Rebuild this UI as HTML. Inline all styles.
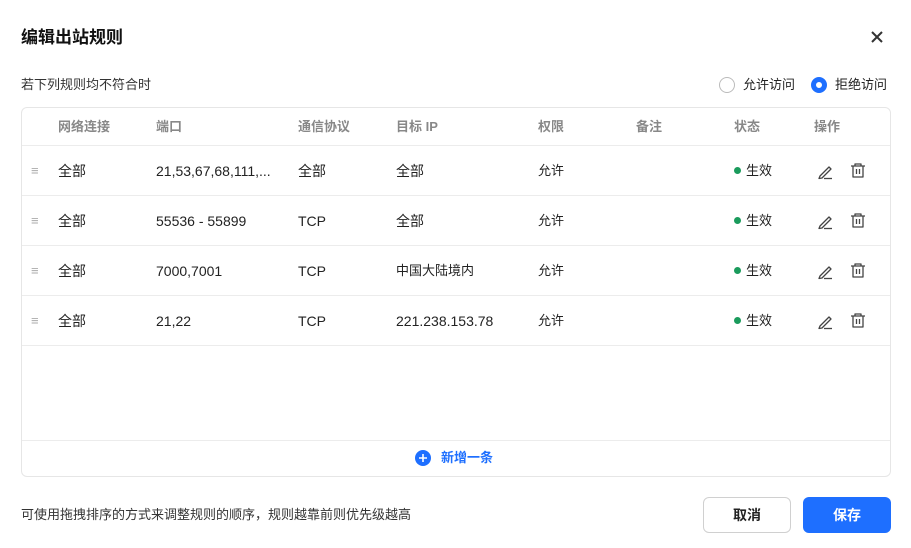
<!DOCTYPE html>
<html><head><meta charset="utf-8"><style>
*{margin:0;padding:0;box-sizing:border-box}
body{width:911px;height:548px;background:#fff;font-family:"Liberation Sans","Noto Sans CJK SC",sans-serif;color:#1f1f1f;position:relative;overflow:hidden;font-size:14px;line-height:20px}
.a{position:absolute;white-space:nowrap;line-height:20px}
.title{left:21px;top:28px;font-size:17px;font-weight:bold;color:#111}
.box{left:21px;top:107px;width:870px;height:370px;border:1px solid #e6e6e6;border-radius:6px}
.hl{position:absolute;left:22px;width:868px;height:1px;background:#ececec}
.th{font-size:13px;color:#888;font-weight:bold;top:117px}
.td{font-size:14px;color:#222;top:0}
.dot{width:7px;height:7px;border-radius:50%;background:#1a9b5c;display:inline-block;margin-right:5px;vertical-align:1px}
.btn{top:497px;height:36px;border-radius:6px;font-size:14px;font-weight:bold;text-align:center;line-height:34px}
</style></head><body>
<div class="a title">编辑出站规则</div>
<svg class="a" style="left:870px;top:30px" width="14" height="14" viewBox="0 0 14 14"><path d="M2 2L12 12M12 2L2 12" stroke="#333" stroke-width="2"/></svg>
<div class="a" style="left:21px;top:75px;font-size:13px;color:#333">若下列规则均不符合时</div>
<div class="a" style="left:719px;top:77px;width:16px;height:16px;border:1px solid #bbb;border-radius:50%"></div>
<div class="a" style="left:743px;top:75px;font-size:13px;color:#222">允许访问</div>
<div class="a" style="left:811px;top:77px;width:16px;height:16px;border:5px solid #1e6fff;border-radius:50%"></div>
<div class="a" style="left:835px;top:75px;font-size:13px;color:#222">拒绝访问</div>
<div class="a box"></div>
<div class="hl" style="top:145px"></div>
<div class="hl" style="top:195px"></div>
<div class="hl" style="top:245px"></div>
<div class="hl" style="top:295px"></div>
<div class="hl" style="top:345px"></div>
<div class="hl" style="top:440px"></div>
<div class="a th" style="left:58px">网络连接</div>
<div class="a th" style="left:156px">端口</div>
<div class="a th" style="left:298px">通信协议</div>
<div class="a th" style="left:396px">目标 IP</div>
<div class="a th" style="left:538px">权限</div>
<div class="a th" style="left:636px">备注</div>
<div class="a th" style="left:734px">状态</div>
<div class="a th" style="left:814px">操作</div>
<div class="a" style="left:0;top:161px;width:911px">
 <span class="a" style="left:31px;top:0;color:#aaa;font-size:13px">≡</span>
 <span class="a td" style="left:58px">全部</span><span class="a td" style="left:156px">21,53,67,68,111,...</span><span class="a td" style="left:298px">全部</span><span class="a td" style="left:396px">全部</span><span class="a td" style="left:538px;font-size:13px">允许</span><span class="a td" style="left:734px;font-size:13px"><i class="dot"></i>生效</span>
</div>
<div class="a" style="left:0;top:211px;width:911px">
 <span class="a" style="left:31px;top:0;color:#aaa;font-size:13px">≡</span>
 <span class="a td" style="left:58px">全部</span><span class="a td" style="left:156px">55536 - 55899</span><span class="a td" style="left:298px">TCP</span><span class="a td" style="left:396px">全部</span><span class="a td" style="left:538px;font-size:13px">允许</span><span class="a td" style="left:734px;font-size:13px"><i class="dot"></i>生效</span>
</div>
<div class="a" style="left:0;top:261px;width:911px">
 <span class="a" style="left:31px;top:0;color:#aaa;font-size:13px">≡</span>
 <span class="a td" style="left:58px">全部</span><span class="a td" style="left:156px">7000,7001</span><span class="a td" style="left:298px">TCP</span><span class="a td" style="left:396px;font-size:13px">中国大陆境内</span><span class="a td" style="left:538px;font-size:13px">允许</span><span class="a td" style="left:734px;font-size:13px"><i class="dot"></i>生效</span>
</div>
<div class="a" style="left:0;top:311px;width:911px">
 <span class="a" style="left:31px;top:0;color:#aaa;font-size:13px">≡</span>
 <span class="a td" style="left:58px">全部</span><span class="a td" style="left:156px">21,22</span><span class="a td" style="left:298px">TCP</span><span class="a td" style="left:396px">221.238.153.78</span><span class="a td" style="left:538px;font-size:13px">允许</span><span class="a td" style="left:734px;font-size:13px"><i class="dot"></i>生效</span>
</div>
<svg class="a" style="left:0;top:0" width="911" height="548">
<g fill="none" stroke="#444" stroke-width="1.3" stroke-linejoin="round">
<g id="ic"><path d="M820 176L829 167L831 169L822 178L819 178.5Z"/><path d="M824 178.5H832"/>
<path d="M851 166H865M855 166V164H861V166M853 166V177H863V166M856.5 169V174M859.5 169V174"/></g>
<use href="#ic" y="50"/><use href="#ic" y="100"/><use href="#ic" y="150"/>
</g>
<circle cx="423" cy="458" r="8" fill="#1e6fff"/><path d="M419 458H427M423 454V462" stroke="#fff" stroke-width="1.6"/>
</svg>
<div class="a" style="left:441px;top:448px;font-size:13px;font-weight:bold;color:#1e6fff">新增一条</div>
<div class="a" style="left:21px;top:505px;font-size:13px;color:#333">可使用拖拽排序的方式来调整规则的顺序，规则越靠前则优先级越高</div>
<div class="a btn" style="left:703px;width:88px;border:1px solid #d0d0d0;color:#222">取消</div>
<div class="a btn" style="left:803px;width:88px;background:#1e6fff;color:#fff;line-height:36px">保存</div>
</body></html>
